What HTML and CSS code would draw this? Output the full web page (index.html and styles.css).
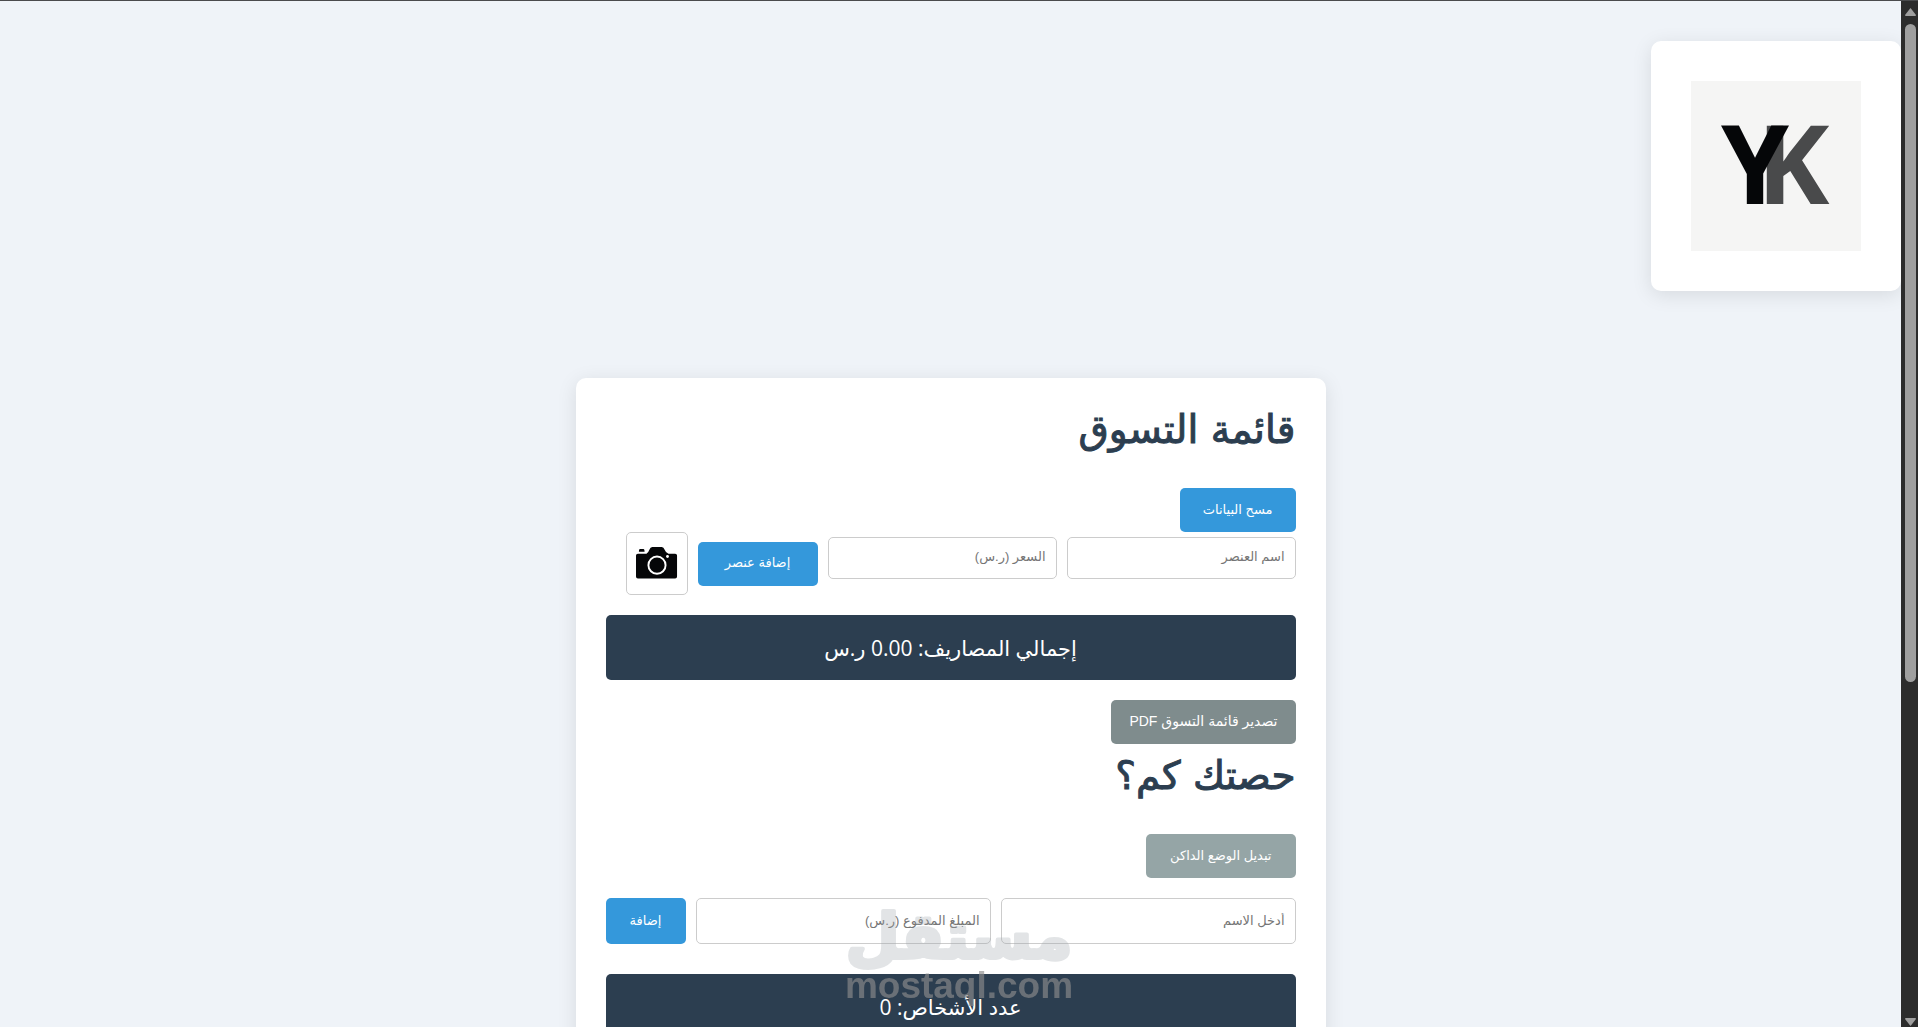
FILE: index.html
```html
<!DOCTYPE html>
<html lang="ar" dir="rtl">
<head>
    <meta charset="UTF-8">
    <meta name="viewport" content="width=device-width, initial-scale=1.0">
    <title>قائمة التسوق</title>
    <link rel="stylesheet" href="styles.css">
</head>
<body>
    <div class="scrollbar" aria-hidden="true">
        <svg class="scroll-arrow" viewBox="0 0 13 10"><path d="M6.5 1 L12 8 Q12 9 11 9 H2 Q1 9 1 8 Z"/></svg>
        <div class="scroll-thumb"></div>
        <svg class="scroll-arrow scroll-arrow-down" viewBox="0 0 13 10"><path d="M6.5 1 L12 8 Q12 9 11 9 H2 Q1 9 1 8 Z"/></svg>
    </div>

    <div class="page">
        <div class="logo-card">
            <svg class="logo" viewBox="0 0 170 170" direction="ltr" role="img" aria-label="YK">
                <rect width="170" height="170" fill="#f5f5f4"/>
                <text class="logo-k" x="66" y="123">K</text>
                <text class="logo-y" x="30" y="123">Y</text>
            </svg>
        </div>

        <main class="container">
            <h1>قائمة التسوق</h1>
            <button type="button" class="btn">مسح البيانات</button>

            <form class="item-form">
                <input type="text" class="field" placeholder="اسم العنصر" aria-label="اسم العنصر">
                <input type="text" class="field" placeholder="السعر (ر.س)" aria-label="السعر (ر.س)">
                <button type="button" class="btn btn-item">إضافة عنصر</button>
                <button type="button" class="camera-btn" aria-label="كاميرا">
                    <svg viewBox="0 0 44 34">
                        <path fill="#050608" d="M4 2h4q1 0 1 3H3q0-3 1-3z M2 7h9q2-1 3-4q1-3 3-3h10q2 0 3 3q1 3 4 4h7q2 0 2 2v22q0 2-2 2H2q-2 0-2-2V9q0-2 2-2z"/>
                        <circle cx="22" cy="19" r="9" fill="none" stroke="#fff" stroke-width="2"/>
                        <circle cx="33" cy="10" r="1.5" fill="#fff"/>
                    </svg>
                </button>
            </form>

            <div class="summary">إجمالي المصاريف: 0.00 ر.س</div>
            <button type="button" class="btn btn-export">تصدير قائمة التسوق PDF</button>

            <h1>حصتك كم؟</h1>
            <button type="button" class="btn btn-dark">تبديل الوضع الداكن</button>

            <form class="person-form">
                <input type="text" class="field" placeholder="أدخل الاسم" aria-label="أدخل الاسم">
                <input type="text" class="field" placeholder="المبلغ المدفوع (ر.س)" aria-label="المبلغ المدفوع (ر.س)">
                <button type="button" class="btn btn-add">إضافة</button>
            </form>

            <div class="summary">عدد الأشخاص: 0</div>
        </main>
    </div>

    <div class="watermark">
        <svg viewBox="0 0 230 100">
            <text class="mark-ar" x="115" y="58" direction="rtl">مستقل</text>
            <text class="mark-en" x="115" y="98" direction="ltr">mostaql.com</text>
        </svg>
    </div>
</body>
</html>
```
FILE: styles.css
```css
* {
    box-sizing: border-box;
}

body {
    margin: 0;
    height: 100vh;
    display: flex;
    direction: ltr;
    flex-direction: row-reverse;
    overflow: hidden;
    background: #eff3f8;
    border-top: 1px solid #4a4b4d;
    font-family: "Open Sans", "DejaVu Sans", sans-serif;
    color: #2c3e50;
}

/* Scrollbar */
.scrollbar {
    width: 17px;
    flex-shrink: 0;
    background: #2c2c2c;
    display: flex;
    flex-direction: column;
    align-items: center;
    padding: 6px 0 0 2px;
}

.scroll-arrow {
    width: 13px;
    height: 10px;
    fill: #9f9f9f;
}

.scroll-arrow-down {
    transform: rotate(180deg);
    margin-top: auto;
}

.scroll-thumb {
    width: 11px;
    height: 64.5%;
    margin-top: 7px;
    border-radius: 6px;
    background: #9f9f9f;
}

.page {
    flex: 1;
    direction: rtl;
    padding-top: 40px;
    overflow: hidden;
}

/* Logo */
.logo-card {
    width: 250px;
    padding: 40px;
    background: white;
    border-radius: 10px;
    box-shadow: 0 4px 20px rgba(0, 0, 0, 0.1);
}

.logo {
    display: block;
    width: 100%;
}

.logo text {
    font-family: "Open Sans", sans-serif;
    font-weight: bold;
    font-size: 109px;
}

.logo-y {
    fill: #050608;
}

.logo-k {
    fill: #494a4b;
}

/* Main card */
.container {
    max-width: 750px;
    margin: 87px auto 0;
    padding: 30px;
    background: white;
    border-radius: 10px;
    box-shadow: 0 4px 20px rgba(0, 0, 0, 0.1);
}

h1 {
    margin: 0 0 30px;
    height: 50px;
    line-height: 44px;
    font-family: "DejaVu Sans", sans-serif;
    font-size: 39px;
    font-weight: normal;
    -webkit-text-stroke: 1px #2c3e50;
}

.btn {
    display: block;
    height: 44px;
    padding: 0 23px 2px;
    border: none;
    border-radius: 5px;
    background: #3498db;
    color: white;
    font-family: "Liberation Sans", "DejaVu Sans", sans-serif;
    font-size: 13px;
    white-space: nowrap;
    cursor: pointer;
}

.field {
    flex: 1;
    min-width: 0;
    height: 42px;
    padding: 0 10px 2px;
    border: 1px solid #ccc;
    border-radius: 5px;
    background: white;
    font-family: "Liberation Sans", "DejaVu Sans", sans-serif;
    font-size: 13px;
}

.field::placeholder {
    color: #757575;
}

.item-form {
    display: flex;
    gap: 10px;
    align-items: center;
    padding-left: 20px;
    margin-bottom: 20px;
}

.item-form .field {
    margin-bottom: 12px;
}

.btn-item {
    width: 120px;
}

.camera-btn {
    width: 62px;
    height: 63px;
    padding: 0 9px;
    border: 1px solid #ccc;
    border-radius: 5px;
    background: white;
    cursor: pointer;
}

.camera-btn svg {
    display: block;
    width: 100%;
}

.summary {
    height: 65px;
    padding-top: 2px;
    line-height: 63px;
    border-radius: 5px;
    background: #2c3e50;
    color: white;
    font-size: 21px;
    text-align: center;
}

.btn-export {
    margin: 20px 0 10px;
    padding: 0 18px 2px;
    background: #7f8c8d;
    font-size: 14px;
}

.btn-dark {
    margin-bottom: 20px;
    padding: 0 24px 2px;
    background: #95a5a6;
}

.person-form {
    display: flex;
    gap: 10px;
    margin-bottom: 30px;
}

.person-form .field,
.btn-add {
    height: 46px;
}

.btn-add {
    width: 80px;
}

/* Watermark */
.watermark {
    position: fixed;
    left: 0;
    right: 0;
    bottom: 27px;
    display: flex;
    justify-content: center;
    pointer-events: none;
}

.watermark svg {
    width: 230px;
    height: 100px;
    overflow: visible;
}

.watermark text {
    text-anchor: middle;
}

.mark-ar {
    font-family: "DejaVu Sans", sans-serif;
    font-weight: bold;
    font-size: 62px;
    fill: #a0a7ad;
    stroke: #a0a7ad;
    stroke-width: 4px;
    stroke-linejoin: round;
    opacity: 0.3;
}

.mark-en {
    font-family: "Liberation Sans", Arial, sans-serif;
    font-weight: bold;
    font-size: 37px;
    fill: #8c8c8c;
    opacity: 0.65;
}
```
